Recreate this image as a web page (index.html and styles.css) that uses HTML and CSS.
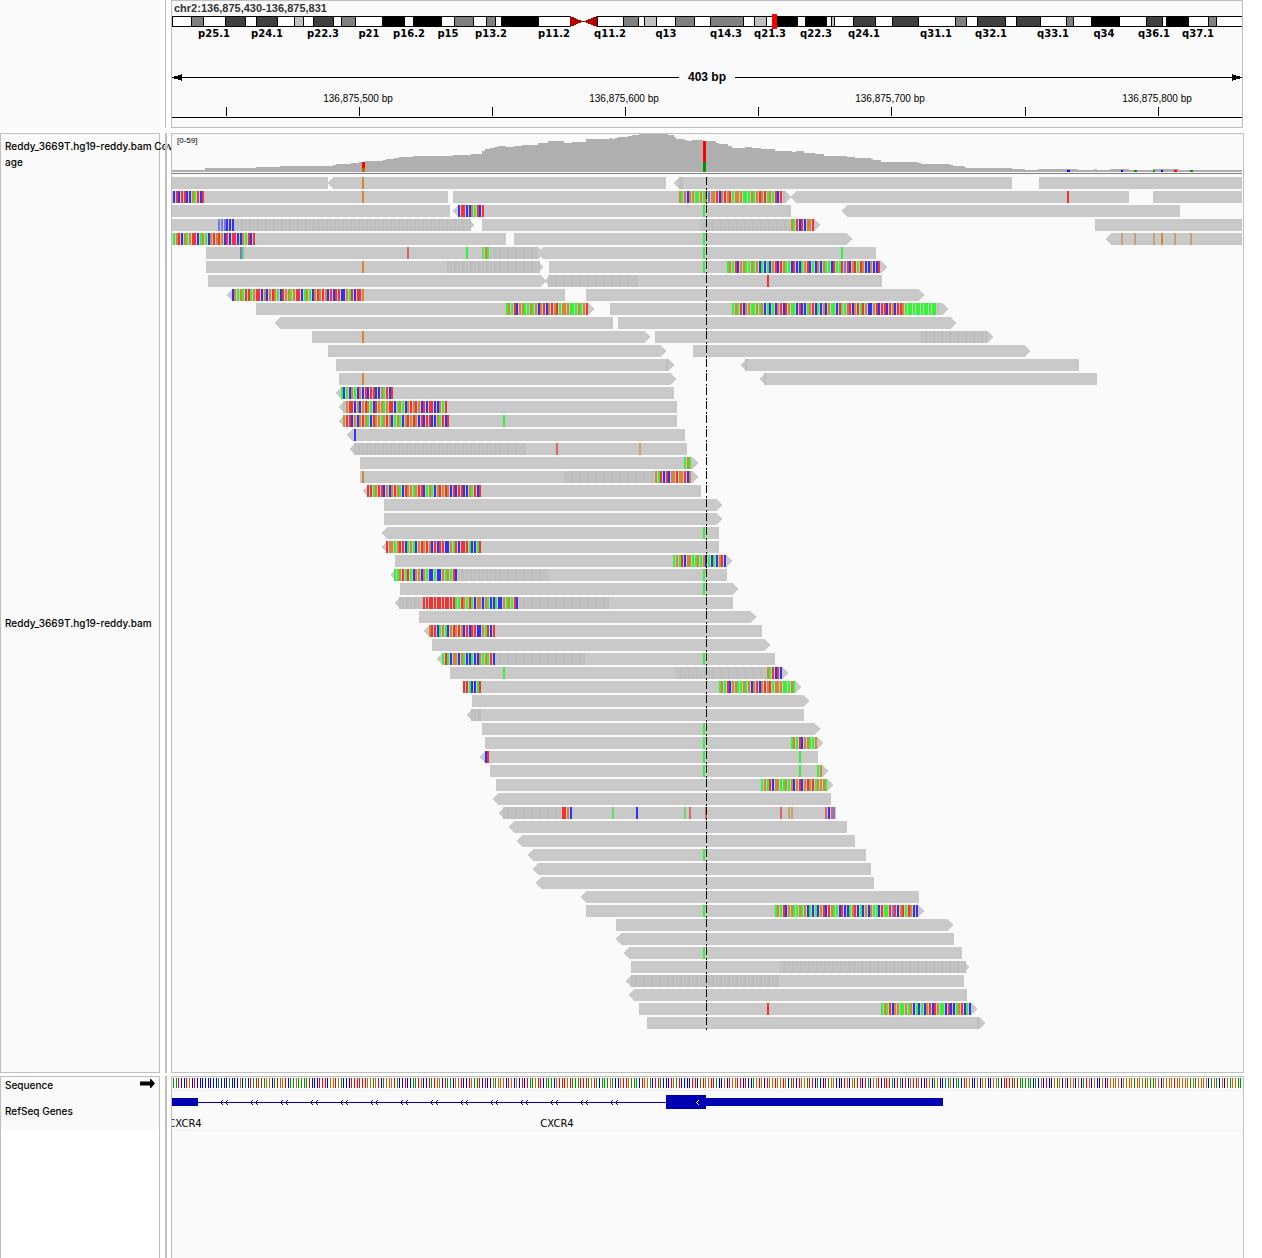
FILE: index.html
```html
<!DOCTYPE html>
<html lang="en">
<head>
<meta charset="utf-8">
<title>chr2:136,875,430-136,875,831</title>
<link rel="stylesheet" href="styles.css">
</head>
<body>
<main class="viewer">
  <section class="row row-header">
    <div class="side side-header"></div>
    <div class="divider divider-thin"></div>
    <div class="panel panel-header">
      <h1 class="locus">chr2:136,875,430-136,875,831</h1>
      <svg class="chart cytobands" id="cytobands" viewBox="172 14 1070 15" preserveAspectRatio="none"></svg>
      <div class="labels band-labels" id="band-labels"></div>
      <div class="span">
        <svg class="head" viewBox="0 0 10 7"><path d="M0 3h2v-1h4v-1h3v-1h1v7h-1v-1h-3v-1h-4v-1h-2z"/></svg>
        <span class="span-line"></span>
        <span class="span-text">403 bp</span>
        <span class="span-line"></span>
        <svg class="head" viewBox="0 0 10 7"><path d="M10 3h-2v-1h-4v-1h-3v-1h-1v7h1v-1h3v-1h4v-1h2z"/></svg>
      </div>
      <div class="labels ruler-labels" id="ruler-labels"></div>
      <svg class="chart ruler" id="ruler" viewBox="172 107 1070 11" preserveAspectRatio="none"></svg>
    </div>
  </section>

  <section class="row row-data">
    <div class="side side-data">
      <p class="name name-coverage">Reddy_3669T.hg19-reddy.bam Cov<br>age</p>
      <p class="name name-reads">Reddy_3669T.hg19-reddy.bam</p>
    </div>
    <div class="divider"></div>
    <div class="panel panel-data">
      <span class="scale">[0-59]</span>
      <svg class="chart coverage" id="coverage" viewBox="172 134 1070 40" preserveAspectRatio="none"></svg>
      <svg class="chart reads" id="reads" viewBox="172 174 1070 898" preserveAspectRatio="none"></svg>
    </div>
  </section>

  <section class="row row-features">
    <div class="side side-features">
      <div class="feature-names">
        <p class="name name-sequence">Sequence
          <svg class="strand" viewBox="0 0 15 9"><path d="M0 2.500h10v-2.500h1l4 4.500l-4 4.500h-1v-2.500h-10z"/></svg>
        </p>
        <p class="name">RefSeq Genes</p>
      </div>
    </div>
    <div class="divider"></div>
    <div class="panel panel-features">
      <svg class="chart sequence" id="sequence" viewBox="172 1077 1070 13" preserveAspectRatio="none"></svg>
      <div class="gene-track">
        <svg class="chart gene" id="gene" viewBox="172 1091 1070 25" preserveAspectRatio="none"></svg>
        <div class="labels gene-labels" id="gene-labels"></div>
      </div>
    </div>
  </section>
</main>
<script src="tracks.js"></script>
</body>
</html>
```
FILE: styles.css
```css
* {
  box-sizing: border-box;
}

body {
  margin: 0;
  background: #fff;
  color: #000;
  font-family: "Liberation Sans", Arial, sans-serif;
}

.viewer {
  display: flex;
  flex-direction: column;
  min-height: 100vh;
  padding-right: 18px;
}

.row {
  display: grid;
  grid-template-columns: 160px 11px minmax(0, 1fr);
}

.row-header {
  margin-bottom: 5px;
  padding-right: 1px;
}

.row-data {
  margin-bottom: 3px;
}

.row-features {
  flex: 1;
}

.side {
  border: 1px solid #bfbfbf;
}

.side-header {
  border: 0;
  background: #fafafa;
}

.side-data {
  display: flex;
  flex-direction: column;
  background: #fafafa;
}

.side-features {
  border-bottom: 0;
}

.divider {
  width: 2px;
  margin-left: 5px;
  background: #bfbfbf;
}

.divider-thin {
  width: 1px;
}

.panel {
  position: relative;
  border: 1px solid #bfbfbf;
  background: #fafafa;
}

.panel-data {
  padding-right: 1px;
}

.panel-features {
  padding-right: 1px;
  border-bottom: 0;
}

.chart {
  display: block;
  width: 100%;
  shape-rendering: crispEdges;
}

/* locus, chromosome and ruler */
.locus {
  margin: 0 0 0 2px;
  height: 13px;
  font-size: 11px;
  line-height: 15px;
  color: #333;
}

.cytobands {
  height: 15px;
}

.labels {
  position: relative;
}

.label {
  position: absolute;
  top: 0;
  transform: translateX(-50%);
  white-space: nowrap;
}

.band-labels {
  height: 40px;
  font: bold 10px/10px "DejaVu Sans", sans-serif;
}

.span {
  display: flex;
  align-items: center;
  height: 16px;
}

.span-line {
  flex: 1;
  height: 1px;
  background: #000;
}

.span-text {
  padding: 0 9px;
  font-size: 12px;
  line-height: 16px;
  font-weight: bold;
}

.head {
  width: 10px;
  height: 7px;
  shape-rendering: crispEdges;
}

.ruler-labels {
  height: 22px;
  font-size: 10px;
  line-height: 28px;
}

.ruler {
  height: 11px;
  margin-bottom: 9px;
}

/* track names */
.name {
  margin: 0;
  padding-left: 4px;
  font: 500 10px/16px Inter, sans-serif;
  white-space: nowrap;
}

.name-coverage {
  height: 40px;
  padding-top: 4px;
}

.name-reads {
  display: flex;
  flex: 1;
  align-items: center;
}

.feature-names {
  height: 53px;
  background: #fafafa;
}

.name-sequence {
  display: flex;
  justify-content: space-between;
  align-items: center;
  padding-right: 4px;
  margin-bottom: 10px;
}

.strand {
  width: 15px;
  height: 9px;
  margin-bottom: 3px;
}

/* tracks */
.scale {
  position: absolute;
  top: 2px;
  left: 5px;
  font-size: 8px;
  line-height: 9px;
}

.coverage {
  height: 40px;
}

.reads {
  height: 898px;
}

.sequence {
  height: 13px;
}

.gene-track {
  height: 41px;
  overflow: hidden;
  border: solid #eee;
  border-width: 1px 0;
}

.gene {
  height: 25px;
}

.gene-labels {
  font: 10px/15px "DejaVu Sans", sans-serif;
}
```
FILE: tracks.js
```javascript
const LEFT = 172, WIDTH = 1070;
const FIRST_BASE = 173.6, STEP = WIDTH / 402;

const rect = (x, y, w, h, fill) => `<rect x="${x}" y="${y}" width="${w}" height="${h}" fill="${fill}"/>`;
const put = (id, html) => { document.getElementById(id).innerHTML = html; };
const label = (x, text) => `<span class="label" style="left:${(x - LEFT) / WIDTH * 100}%">${text}</span>`;
const baseIndex = x => Math.round((x + 0.5 - FIRST_BASE) / STEP);
const baseX = k => Math.floor(FIRST_BASE + STEP * k);

/* Chromosome bands: start, end, stain */
const bands = [
  [191, 204, '#808080'], [225, 246, '#404040'], [256, 278, '#404040'], [294, 304, '#c0c0c0'],
  [313, 334, '#404040'], [341, 356, '#808080'], [382, 405, '#000'], [413, 442, '#000'],
  [454, 474, '#808080'], [486, 496, '#808080'], [501, 539, '#000'], [623, 639, '#808080'],
  [644, 657, '#c0c0c0'], [675, 695, '#808080'], [710, 744, '#808080'], [754, 767, '#c0c0c0'],
  [777, 798, '#000'], [805, 827, '#000'], [831, 835, '#c0c0c0'], [853, 876, '#404040'],
  [892, 919, '#404040'], [955, 967, '#808080'], [977, 1006, '#404040'], [1016, 1041, '#404040'],
  [1066, 1074, '#808080'], [1091, 1120, '#000'], [1146, 1163, '#404040'], [1166, 1189, '#000'],
  [1208, 1217, '#808080']
];
let out = rect(172, 16, 399, 11, '#000') + rect(173, 17, 397, 9, '#fff') +
  rect(597, 16, 645, 11, '#000') + rect(598, 17, 644, 9, '#fff');
for (const [a, b, fill] of bands) {
  out += rect(a, 16, b - a, 11, '#000') + rect(a + 1, 17, b - a - 2, 9, fill);
}
out += '<path fill="#b20000" d="M570 16L583 21.500L570 27zM597 16L583 21.500L597 27z"/>';
out += rect(772, 14, 5, 15, '#f00');
put('cytobands', out);

put('band-labels', [
  [214, 'p25.1'], [267, 'p24.1'], [323, 'p22.3'], [369, 'p21'], [409, 'p16.2'], [448, 'p15'],
  [491, 'p13.2'], [554, 'p11.2'], [610, 'q11.2'], [666, 'q13'], [726, 'q14.3'], [770, 'q21.3'],
  [816, 'q22.3'], [864, 'q24.1'], [936, 'q31.1'], [991, 'q32.1'], [1053, 'q33.1'], [1104, 'q34'],
  [1154, 'q36.1'], [1198, 'q37.1']
].map(b => label(...b)).join(''));

put('ruler-labels', [[358, 500], [624, 600], [890, 700], [1157, 800]]
  .map(([x, n]) => label(x, `136,875,${n} bp`)).join(''));
put('ruler', [226, 359, 492, 625, 758, 891, 1025, 1158]
  .map(x => rect(x, 107, 1, 9, '#000')).join('') + rect(172, 117, 1070, 1, '#000'));

/* Coverage: x where a new depth starts, y of its top */
const depth = [
  [172, 170], [205, 168], [256, 167], [280, 166], [333, 165], [336, 164], [351, 163], [359, 162],
  [365, 161], [383, 160], [386, 159], [394, 158], [399, 157], [413, 156], [453, 155], [471, 154],
  [482, 151], [485, 149], [490, 148], [495, 147], [498, 146], [506, 147], [514, 146], [522, 145],
  [538, 143], [548, 141], [564, 143], [572, 142], [586, 139], [610, 138], [612, 139], [615, 138],
  [618, 137], [628, 136], [632, 135], [639, 134], [668, 135], [674, 137], [676, 139], [684, 140],
  [687, 141], [692, 140], [703, 141], [716, 143], [719, 144], [728, 146], [732, 148], [745, 147],
  [752, 148], [761, 149], [775, 151], [792, 152], [796, 151], [804, 153], [815, 154], [824, 156],
  [847, 157], [855, 158], [871, 159], [873, 160], [881, 162], [918, 163], [921, 164], [950, 165],
  [953, 166], [964, 167], [966, 168], [1012, 169], [1025, 170], [1038, 169], [1078, 170],
  [1094, 169], [1097, 170], [1110, 169], [1129, 170], [1153, 169], [1179, 170]
];
out = '<path fill="#afafaf" d="M172 172' + depth.map(([x, y]) => `H${x}V${y}`).join('') + 'H1242V172z"/>';
out += rect(362, 162, 3, 6, '#f00') + rect(362, 168, 3, 4, '#c86400');
out += rect(703, 141, 3, 21, '#f00') + rect(703, 162, 3, 10, '#009600');
for (const [x, w, fill] of [[1067, 3, '#00f'], [1121, 2, '#00f'], [1134, 3, '#009600'],
  [1153, 2, '#009600'], [1161, 2, '#00f'], [1174, 3, '#f00'], [1190, 3, '#009600']]) {
  out += rect(x, 170, w, 2, fill);
}
put('coverage', out + rect(172, 173, 1070, 1, '#808080'));

/* Reads, one line a row.
   a-b, a<b, a>b: a read and its direction; @x:BASES mismatches; ~a:b low quality bases */
const rows = `
172-328 328<666 674<1012 1039-1242 @362:O @679:dd
172-448 453>791 791<1129 1153-1242 @173:BRBRRBBOGRBR @362:O @679:OGrBOOGGOGObOORBORORGOOOGGGOGORORGOGRBRd @1067:R
172-450 453<791 842<1180 @458:BRRBBOGRBR @703:G
172>474 482>820 1095-1242 @218:bbbBBB ~235:469 ~700:789 @791:OGRBRBOOR
172-506 514>852 1106<1242 @173:GORBOGORRBGOGBOROROBRBRRBBOGRBR @703:G @1121:o @1134:o @1153:o @1161:O @1174:o @1190:o
206>544 538<876 @240:bg @407:r @466:G @482:gOG ~489:536 @703:G @841:G
206>543 549>887 @362:O ~447:538 @703:G @727:GOGRBOOGGOGOBGBGBORBROGGBRBBGORBGBOBOGGBRGGRbRBORGROBBOBBR
208>546 545<882 ~548:636 @767:R
227<565 586>924 @232:BOGOGRRGORRBOBOROGBROOGORRBGOGBOROROBRBRRBBOGRBRRO
256>594 610>948 @506:GOGRBOOGGOGOBORBORORGOOOGGGOGOR @732:GOGRBOOGGOGOBGBGBORBROGGBRBBGORBGBOBOGGBRgGrRBORGROBBORBRRBROBRROGGGGGGGGGGGGd
275<613 618>956
312>650 655>993 @362:O ~921:986
328>666 693>1030
336>674 741<1079 @666:d @745:d
339>676 760<1097 @362:O @764:d
336<674 @341:GBGBOGBOBRBRRBBOGRBR
339<677 @344:dORRBOBOROGBROOGORRBGOGBOROROBRBRRBBOGR
339<677 @344:ORRBOBOROGBROOGOROBGOGBOROROBRBRRBBOGRBR @503:G
347<685 @354:B
350<687 ~354:525 @556:r @639:o
360>698 @684:GOG
360>698 @362:O ~564:652 @655:OGRBRBOOROORBO
363<701 @367:RRGORRBOBOROGBROOGORRBGOGBOROROBRBRRBBOGRBR
384>722
384>722
382<719 @703:G
382<719 @386:ROOGORRBGOGBOROROBRBRRBBOGRBRRRGBBGR
395>732 @674:GOGRBOOGGOGOBGBGBORB
391<727 @394:GGORGRGBOOBOGBBGBBOGOGRB ~457:546 @703:G
400>738 @703:G
395<733 ~399:420 @423:RRRRRRRRRRRRGGROGRGBOOBOGBBGBBOGOGRB ~520:607
419>756
424<762 @429:ORRBGOGBOROROBRBRRBBOGRBR
432>770
437<775 @442:GRGBOOBOGBBGBBOGOGRB ~495:583 @703:G
450>788 @503:G ~676:765 @767:OGRBRB
463>801 @463:RRGBBGR @719:GOGRBOOGGOGOBORBORORGOOOGGGOG
472>809
467<804 ~471:478
482>820 @703:G
485>823 @703:G @791:GOGRBOOGGO
480<818 @485:BR @703:G @799:G
490>828 @703:G @799:G @817:GO
496>833 @761:GOGRBOOGGOGOBORBORORGOOOG
493<831
499<836 ~503:560 @562:RROB @612:g @636:B @684:g @690:r @706:r @780:r @788:oo @825:rBrb
509<847
517<855
528<866 @703:G
533<871
536<874
581<919
586>924 @703:G @775:GOGRBOOGGOGOBGBGBORBROGGBRBBGORBGBOBOGGBRGGRbRBORGROBB
616>953
616<954
624<962 @703:G
631>969 ~780:963
626<964 ~630:777
629<967
639>977 @767:R @881:GOGRBOOGGOGOBGBGBORBROGGBRBBGORBGB
647>985 @977:d`.trim().split('\n');

const baseFill = {
  R: '#f43232', G: '#32f432', B: '#3232f4', O: '#d28732',
  r: '#e06464', g: '#64dc64', b: '#7878d8', o: '#c8a06e', d: '#bebebe'
};

function drawBases(x, letters, y) {
  const k = baseIndex(x);
  return [...letters].map((c, i) => rect(baseX(k + i), y, 2, 12, baseFill[c])).join('');
}

out = '';
rows.forEach((row, r) => {
  const y = 177 + 14 * r;
  for (const token of row.split(' ')) {
    let m;
    if ((m = token.match(/^(\d+)([-<>])(\d+)$/))) {
      const a = +m[1], b = +m[3];
      const from = m[2] === '<' ? a + 5 : a, to = m[2] === '>' ? b - 5 : b;
      const head = m[2] === '<' ? `L${a} ${y + 6}` : '';
      const tail = m[2] === '>' ? `L${b} ${y + 6}` : '';
      out += `<path fill="#c9c9c9" d="M${from} ${y}H${to}${tail}L${to} ${y + 12}H${from}${head}z"/>`;
    }
  }
  for (const token of row.split(' ')) {
    let m;
    if ((m = token.match(/^@(\d+):(\w+)$/))) {
      out += drawBases(+m[1], m[2], y);
    } else if ((m = token.match(/^~(\d+):(\d+)$/))) {
      out += drawBases(+m[1], 'd'.repeat(baseIndex(+m[2]) - baseIndex(+m[1]) + 1), y);
    }
  }
});
out += '<path d="M706.500 177V1030" stroke="#000" stroke-dasharray="8 3 2 1"/>';
put('reads', out);

/* Reference sequence, one tick a base */
const reference =
  'GGRBBROBRBBBBBBBBGBBBGBBBOBGBRGRGRGOOBGROORBGGOGGGGRBBBRRRBOOROGBBBRRRRRROOGORBGOOORGBBRBBGGR' +
  'OBBRGROOBRGGBOORBBROGGRBRBBOGO' +
  ('OOBROBOBRBRGGORRBGGGBORRRORGGGRRRGORGBGGGOGBBORROGGGBROOGBRRGBBBROGRBBBBRRBGROORRGBBOBROORRBRBBGOROBROOROO' +
  'ROBGRBROOGRRBGBBRGOOBBBROBOGRRBRGBOORBRRRGBRGBRBORROBBROBGOBBGGOBGGGBROGGORRRBRO').slice(0, 173) +
  'BROOBBOBOOBBOOGBRRRRGRGGGGGBGBOBRBBOGOBOBOOBOBGROBOBBOBROOOOBOOOOGOOOGOGGOOBOOOOROOOOOGOGOOOOBGOGBOBOGOOGG';
const tickFill = { R: '#f00', G: '#009600', B: '#00f', O: '#c86400' };
put('sequence', [...reference].slice(0, 402).map((c, k) =>
  rect(baseX(k), 1078, 1, 10, tickFill[c])).join(''));

/* Gene model */
const BLUE = '#0000b2';
out = rect(172, 1098, 26, 8, BLUE) + rect(198, 1102, 468, 1, BLUE) +
  rect(666, 1095, 40, 14, BLUE) + rect(706, 1098, 237, 8, BLUE);
const chevron = (x, fill) => [[2, -2], [1, -1], [0, 0], [1, 1], [2, 2]]
  .map(([dx, dy]) => rect(x + dx, 1102 + dy, 1, 1, fill)).join('');
for (let x = 220; x <= 610; x += 30) out += chevron(x, BLUE) + chevron(x + 5, BLUE);
put('gene', out + chevron(696, '#fff'));
put('gene-labels', label(185, 'CXCR4') + label(557, 'CXCR4'));
```
